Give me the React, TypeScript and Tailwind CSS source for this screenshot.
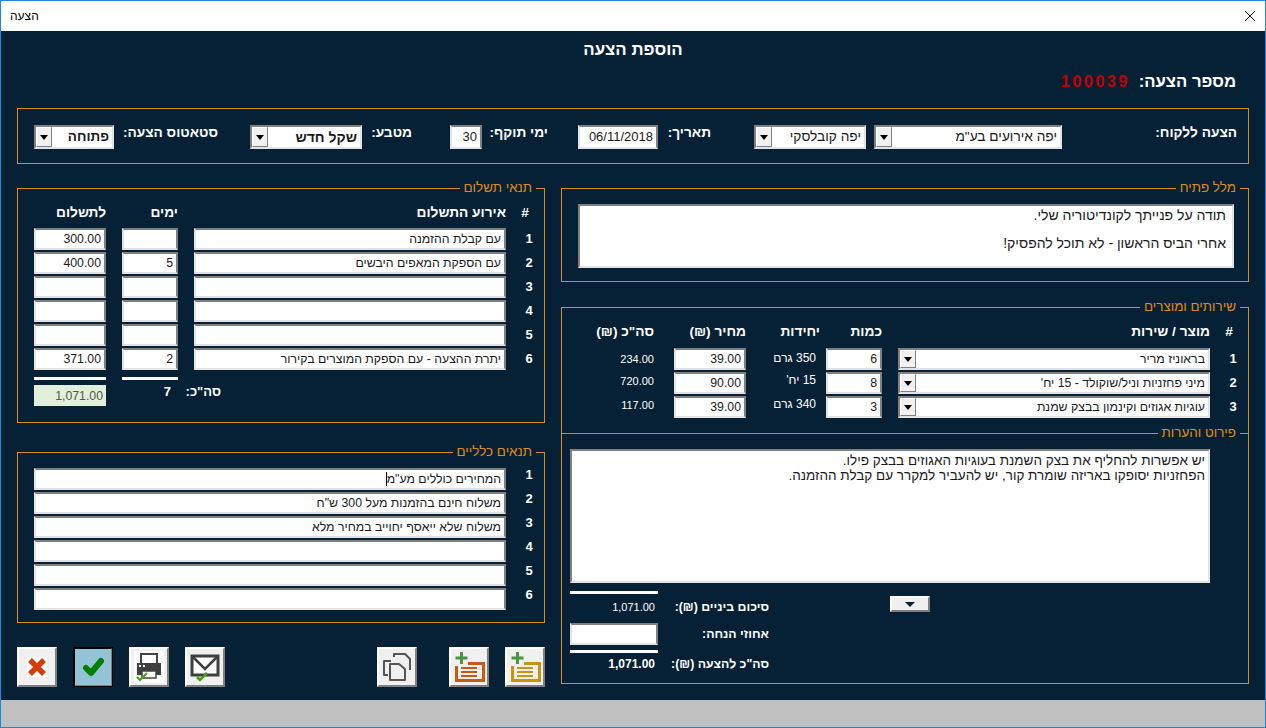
import React from "react";

const font = { fontFamily: '"Liberation Sans", "DejaVu Sans", sans-serif' };

function Field({ w, children, bold, h = "h-[22px]", className = "text-[12.3px]" }: { w: string; children?: React.ReactNode; bold?: boolean; h?: string; className?: string }) {
  return (
    <div className={`${w} ${h} ${className} shrink-0 bg-white border-2 border-t-[#808080] border-r-[#808080] border-b-[#e3e3e3] border-l-[#e3e3e3] pr-[3px] pl-[2px] flex items-center text-[#1a1a1a] whitespace-nowrap overflow-hidden ${bold ? "font-bold" : "font-normal"}`}>
      {children}
    </div>
  );
}

function Arrow() {
  return (
    <span className="w-0 h-0 border-x-[4px] border-x-transparent border-t-[5px] border-t-black" />
  );
}

function Combo({ w, text, bold, h = "h-[22px]", size = "text-[12.3px]" }: { w: string; text: string; bold?: boolean; h?: string; size?: string }) {
  return (
    <div className={`${w} ${h} shrink-0 bg-white border-2 border-t-[#808080] border-r-[#e3e3e3] border-b-[#e3e3e3] border-l-[#808080] flex items-center ${size} text-[#1a1a1a] whitespace-nowrap overflow-hidden ${bold ? "font-bold" : "font-normal"}`}>
      <span className="flex-1 pr-[3px] pl-[2px] overflow-hidden">{text}</span>
      <span className="w-[16px] self-stretch shrink-0 bg-[#f0f0f0] border border-t-white border-l-white border-b-[#808080] border-r-[#808080] flex items-center justify-center">
        <Arrow />
      </span>
    </div>
  );
}

function Box({ title, h, children }: { title: string; h: string; children: React.ReactNode }) {
  return (
    <fieldset className={`${h} min-w-0 border border-[#e08c1a] m-0 p-0`}>
      <legend className="mr-[8px] px-[4px] h-[16px] leading-[16px] text-[13.4px] text-[#e08c1a]">{title}</legend>
      {children}
    </fieldset>
  );
}

function Head({ w, children, className = "" }: { w: string; children?: React.ReactNode; className?: string }) {
  return <div className={`${w} ${className} shrink-0 text-[13.7px] leading-[18px] font-bold text-white whitespace-nowrap`}>{children}</div>;
}

function Num({ n, className = "" }: { n: number; className?: string }) {
  return <div className={`w-[38px] pl-[8px] ${className} shrink-0 text-center text-[13px] leading-[14px] font-bold text-white`}>{n}</div>;
}

const payments = [
  ["עם קבלת ההזמנה", "", "300.00"],
  ["עם הספקת המאפים היבשים", "5", "400.00"],
  ["", "", ""],
  ["", "", ""],
  ["", "", ""],
  ["יתרת ההצעה - עם הספקת המוצרים בקירור", "2", "371.00"],
];

const products = [
  ["בראוניז מריר", "6", "350 גרם", "39.00", "234.00"],
  ["מיני פחזניות וניל/שוקולד - 15 יח'", "8", "15 יח'", "90.00", "720.00"],
  ["עוגיות אגוזים וקינמון בבצק שמנת", "3", "340 גרם", "39.00", "117.00"],
];

const terms = [
  'המחירים כוללים מע"מ',
  'משלוח חינם בהזמנות מעל 300 ש"ח',
  "משלוח שלא ייאסף יחוייב במחיר מלא",
  "",
  "",
  "",
];

function Btn({ children, active, className = "" }: { children: React.ReactNode; active?: boolean; className?: string }) {
  return (
    <div className={`w-[40px] h-[40px] shrink-0 flex items-center justify-center border-2 ${className} ${active ? "bg-[#92c3d6] border-t-black border-l-black border-r-[#808080] border-b-[#808080] outline outline-1 outline-black -outline-offset-1" : "bg-[#f0f0f0] border-t-white border-l-white border-r-[#808080] border-b-[#808080]"}`}>
      {children}
    </div>
  );
}

function AddIcon({ color }: { color: string }) {
  return (
    <svg width="36" height="36" viewBox="0 0 36 36" fill="none">
      <path d="M10.5 3v12M4.5 9h12" stroke="#4a9440" strokeWidth="3" />
      <path d="M17 14.5h15.5v17H5.5V17" stroke={color} strokeWidth="3" />
      <path d="M10 19h16M10 23h16M10 27h16" stroke={color} strokeWidth="2" />
    </svg>
  );
}

export default function App() {
  return (
    <div dir="ltr" style={font} className="w-[1266px] h-[728px] flex flex-col overflow-hidden border border-[#1e88dc] bg-[#c0c0c0]">
      <div className="h-[30px] shrink-0 bg-white flex items-center justify-between pl-[9px] pr-[9px] text-[12px] text-black">
        <span>הצעה</span>
        <svg width="12" height="12" viewBox="0 0 12 12" fill="none">
          <path d="M1 1l10 10M11 1L1 11" stroke="#111" strokeWidth="1" />
        </svg>
      </div>

      <div dir="rtl" className="h-[669px] shrink-0 bg-[#062136] px-[16px] text-white">
        <div className="h-[37px] flex items-center justify-center text-[16.9px] font-bold">הוספת הצעה</div>
        <div className="h-[28px] flex items-center pr-[13px] gap-[9px]">
          <span className="text-[16.7px] font-bold">מספר הצעה:</span>
          <span className="text-[16.7px] font-bold text-[#c00000] tracking-[2.2px]">100039</span>
        </div>

        <div className="mt-[12px] h-[56px] border border-[#e08c1a] pr-[11px] pt-[16px] flex items-start text-[13.7px] font-bold">
          <div className="w-[175px] shrink-0 h-[16px] leading-[16px]">הצעה ללקוח:</div>
          <Combo w="w-[188px]" h="h-[24px]" text={'יפה אירועים בע"מ'} size="text-[13.7px]" />
          <div className="w-[8px] shrink-0" />
          <Combo w="w-[112px]" h="h-[24px]" text="יפה קובלסקי" size="text-[13.7px]" />
          <div className="w-[43px] shrink-0" />
          <div className="w-[53px] shrink-0 h-[16px] leading-[16px]">תאריך:</div>
          <Field w="w-[80px]" h="h-[24px]" className="text-[13px]">06/11/2018</Field>
          <div className="w-[30px] shrink-0" />
          <div className="w-[66px] shrink-0 h-[16px] leading-[16px]">ימי תוקף:</div>
          <Field w="w-[32px]" h="h-[24px]" className="text-[13px]">30</Field>
          <div className="w-[38px] shrink-0" />
          <div className="w-[50px] shrink-0 h-[16px] leading-[16px]">מטבע:</div>
          <Combo w="w-[112px]" h="h-[24px]" text="שקל חדש" bold size="text-[14px]" />
          <div className="w-[32px] shrink-0" />
          <div className="w-[104px] shrink-0 h-[16px] leading-[16px]">סטאטוס הצעה:</div>
          <Combo w="w-[80px]" h="h-[24px]" text="פתוחה" bold size="text-[13.5px]" />
        </div>

        <div className="mt-[16px] flex gap-[16px]">
          <div className="w-[688px] shrink-0">
            <Box title="מלל פתיח" h="h-[102px]">
              <div className="pt-[8px] pr-[14px]">
                <div className="w-[656px] h-[64px] bg-white border-2 border-t-[#808080] border-r-[#e3e3e3] border-b-[#e3e3e3] border-l-[#808080] px-[6px] pt-[2px] text-[14px] leading-[14px] text-[#1a1a1a]">
                  <div>תודה על פנייתך לקונדיטוריה שלי.</div>
                  <div className="h-[14px]" />
                  <div>אחרי הביס הראשון - לא תוכל להפסיק!</div>
                </div>
              </div>
            </Box>

            <div className="mt-[17px]">
              <Box title="שירותים ומוצרים" h="h-[385px]">
                <div className="pt-[8px] h-[33px] flex items-start">
                  <Head w="w-[38px]" className="text-center">#</Head>
                  <Head w="w-[312px]">מוצר / שירות</Head>
                  <div className="w-[16px] shrink-0" />
                  <Head w="w-[56px]">כמות</Head>
                  <div className="w-[6px] shrink-0" />
                  <Head w="w-[74px]">יחידות</Head>
                  <Head w="w-[72px]">מחיר (₪)</Head>
                  <div className="w-[20px] shrink-0" />
                  <Head w="w-[60px]">סה"כ (₪)</Head>
                </div>
                <div className="flex flex-col gap-[2px]">
                  {products.map((p, i) => (
                    <div key={i} className="h-[22px] flex items-center">
                      <Num n={i + 1} />
                      <Combo w="w-[312px]" text={p[0]} />
                      <div className="w-[16px] shrink-0" />
                      <Field w="w-[56px]">{p[1]}</Field>
                      <div className="w-[10px] shrink-0" />
                      <div className={`w-[70px] shrink-0 text-[12px] leading-[14px] text-white whitespace-nowrap ${i === 0 ? "pb-[2px]" : "pb-[6px]"}`}>{p[2]}</div>
                      <Field w="w-[72px]">{p[3]}</Field>
                      <div className="w-[20px] shrink-0" />
                      <div className={`w-[60px] shrink-0 text-[11px] leading-[14px] text-white ${i === 0 ? "" : "pb-[5px]"}`}>{p[4]}</div>
                    </div>
                  ))}
                </div>
                <div className="mt-[7px]">
                  <fieldset className="min-w-0 border-0 border-t border-[#e08c1a] m-0 p-0">
                    <legend className="mr-[8px] px-[4px] h-[16px] leading-[16px] text-[13.4px] text-[#e08c1a]">פירוט והערות</legend>
                    <div className="pt-[8px] pr-[38px]">
                      <div className="w-[640px] h-[134px] bg-white border-2 border-t-[#808080] border-r-[#e3e3e3] border-b-[#e3e3e3] border-l-[#808080] px-[3px] pt-[2px] text-[13.5px] leading-[15px] text-[#1a1a1a] whitespace-nowrap">
                        <div>יש אפשרות להחליף את בצק השמנת בעוגיות האגוזים בבצק פילו.</div>
                        <div>הפחזניות יסופקו באריזה שומרת קור, יש להעביר למקרר עם קבלת ההזמנה.</div>
                      </div>
                      <div className="flex items-start">
                        <div className="mr-[280px] mt-[13px] w-[40px] h-[16px] bg-[#f0f0f0] border-2 border-t-white border-l-white border-b-[#808080] border-r-[#808080] flex items-center justify-center">
                          <span className="w-0 h-0 border-x-[5px] border-x-transparent border-t-[5px] border-t-[#062136]" />
                        </div>
                        <div className="mr-[121px] w-[199px] text-[11px]">
                          <div className="mt-[8px] mr-[111px] h-[3px] bg-white" />
                          <div className="h-[27px] flex items-center">
                            <div className="w-[111px] text-[12.3px] font-bold">סיכום ביניים (₪):</div>
                            <div className="w-[88px] pr-[3px]">1,071.00</div>
                          </div>
                          <div className="h-[26px] flex items-center">
                            <div className="w-[111px] text-[12.3px] font-bold">אחוזי הנחה:</div>
                            <Field w="w-[88px]" />
                          </div>
                          <div className="mt-[3px] mr-[111px] h-[3px] bg-white" />
                          <div className="h-[22px] flex items-center font-bold">
                            <div className="w-[111px] text-[12.3px]">סה"כ להצעה (₪):</div>
                            <div className="w-[88px] pr-[3px] text-[12px]">1,071.00</div>
                          </div>
                        </div>
                      </div>
                    </div>
                  </fieldset>
                </div>
              </Box>
            </div>
          </div>

          <div className="w-[528px] shrink-0">
            <Box title="תנאי תשלום" h="h-[243px]">
              <div className="pt-[8px] h-[32px] flex items-start">
                <Head w="w-[38px]" className="text-center">#</Head>
                <Head w="w-[312px]">אירוע התשלום</Head>
                <div className="w-[16px] shrink-0" />
                <Head w="w-[56px]">ימים</Head>
                <div className="w-[16px] shrink-0" />
                <Head w="w-[72px]">לתשלום</Head>
              </div>
              <div className="flex flex-col gap-[2px]">
                {payments.map((p, i) => (
                  <div key={i} className="flex items-center">
                    <Num n={i + 1} />
                    <Field w="w-[312px]">{p[0]}</Field>
                    <div className="w-[16px] shrink-0" />
                    <Field w="w-[56px]">{p[1]}</Field>
                    <div className="w-[16px] shrink-0" />
                    <Field w="w-[72px]">{p[2]}</Field>
                  </div>
                ))}
              </div>
              <div className="mt-[7px] flex">
                <div className="w-[366px] shrink-0" />
                <div className="w-[56px] h-[3px] bg-white shrink-0" />
                <div className="w-[16px] shrink-0" />
                <div className="w-[72px] h-[3px] bg-white shrink-0" />
              </div>
              <div className="mt-[5px] flex items-start text-[13px] leading-[14px] font-bold">
                <div className="w-[350px] shrink-0 pr-[323px] whitespace-nowrap">סה"כ:</div>
                <div className="w-[16px] shrink-0" />
                <div className="w-[56px] shrink-0 pr-[7px]">7</div>
                <div className="w-[16px] shrink-0" />
                <div className="w-[72px] h-[21px] shrink-0 bg-[#e2efda] text-[#555] text-[12.3px] font-normal flex items-center pr-[3px]">1,071.00</div>
              </div>
            </Box>

            <div className="mt-[21px]">
              <Box title="תנאים כלליים" h="h-[179px]">
                <div className="pt-[8px] flex flex-col gap-[2px]">
                  {terms.map((t, i) => (
                    <div key={i} className="flex items-start">
                      <Num n={i + 1} />
                      <Field w="w-[472px]">
                        {t}
                        {i === 0 && <span className="inline-block w-[1px] h-[14px] bg-black" />}
                      </Field>
                    </div>
                  ))}
                </div>
              </Box>
            </div>

            <div dir="ltr" className="mt-[24px] flex">
              <Btn>
                <svg width="24" height="24" viewBox="0 0 24 24" fill="none">
                  <rect x="2" y="2" width="20" height="20" fill="#fff" />
                  <path d="M5 5l14 14M19 5L5 19" stroke="#d43c08" strokeWidth="5.5" />
                </svg>
              </Btn>
              <Btn active className="ml-[16px]">
                <svg width="24" height="24" viewBox="0 0 24 24" fill="none">
                  <path d="M5 13l5 5L20 6" stroke="#008000" strokeWidth="6" strokeLinecap="round" strokeLinejoin="round" />
                </svg>
              </Btn>
              <Btn className="ml-[16px]">
                <svg width="30" height="32" viewBox="0 0 30 32" fill="none">
                  <rect width="30" height="32" fill="#fff" />
                  <path d="M7 12V3h16v9" stroke="#444" strokeWidth="2" />
                  <path d="M3 12h24v12h-5v-4H8v4H3z" fill="#3f3f3f" />
                  <path d="M8 20h14v7H8z" fill="#fff" stroke="#444" strokeWidth="1.5" />
                  <rect x="5" y="14" width="2" height="2" fill="#fff" />
                  <rect x="9" y="14" width="2" height="2" fill="#fff" />
                  <path d="M3 26l3 3 7-7" stroke="#46a010" strokeWidth="2" />
                </svg>
              </Btn>
              <Btn className="ml-[16px]">
                <svg width="32" height="32" viewBox="0 0 32 32" fill="none">
                  <rect x="3" y="5" width="26" height="19" fill="#fff" stroke="#3f3f3f" strokeWidth="3" />
                  <path d="M4 6l12 12L28 6" stroke="#3f3f3f" strokeWidth="2.5" />
                  <path d="M8 26l3 3 7-7" stroke="#46a010" strokeWidth="2.5" />
                </svg>
              </Btn>
              <Btn className="ml-[152px]">
                <svg width="32" height="32" viewBox="0 0 32 32" fill="none">
                  <path d="M13 6V3h11l5 5v11" stroke="#555" strokeWidth="2" strokeLinejoin="round" />
                  <path d="M7 24H3V10h7" stroke="#555" strokeWidth="2" strokeLinejoin="round" />
                  <path d="M9 13h9l6 5v11H9z" fill="#f0f0f0" stroke="#555" strokeWidth="2" strokeLinejoin="round" />
                </svg>
              </Btn>
              <Btn className="ml-[32px]">
                <AddIcon color="#c95a14" />
              </Btn>
              <Btn className="ml-[16px]">
                <AddIcon color="#c9930a" />
              </Btn>
            </div>
          </div>
        </div>
      </div>
    </div>
  );
}
